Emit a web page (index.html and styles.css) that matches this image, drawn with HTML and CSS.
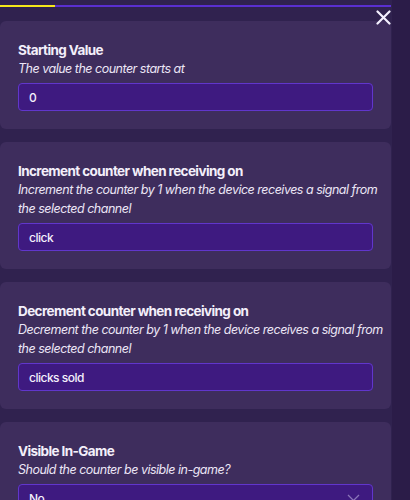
FILE: index.html
```html
<!DOCTYPE html>
<html>
<head>
<meta charset="utf-8">
<link rel="stylesheet" href="styles.css">
</head>
<body>
<div class="page">
  <div class="main">
    <div class="tabbar"><div class="tab-active"></div></div>
    <button class="close" aria-label="Close">
      <svg width="15" height="15" viewBox="0 0 15 15"><path d="M1.5 1.5 L13.5 13.5 M13.5 1.5 L1.5 13.5" stroke="#f4f0ff" stroke-width="2.2" stroke-linecap="round"/></svg>
    </button>
    <div class="cards">
      <section class="card">
        <h3 class="title">Starting Value</h3>
        <p class="desc">The value the counter starts at</p>
        <div class="field">0</div>
      </section>
      <section class="card">
        <h3 class="title">Increment counter when receiving on</h3>
        <p class="desc">Increment the counter by 1 when the device receives a signal from the selected channel</p>
        <div class="field">click</div>
      </section>
      <section class="card">
        <h3 class="title">Decrement counter when receiving on</h3>
        <p class="desc">Decrement the counter by 1 when the device receives a signal from the selected channel</p>
        <div class="field">clicks sold</div>
      </section>
      <section class="card">
        <h3 class="title">Visible In-Game</h3>
        <p class="desc">Should the counter be visible in-game?</p>
        <div class="field select">No
          <svg class="chev" width="13" height="8" viewBox="0 0 13 8"><path d="M1 1 L6.5 6.5 L12 1" stroke="#8a74b8" stroke-width="1.3" fill="none"/></svg>
        </div>
      </section>
    </div>
  </div>
  <div class="rail"></div>
</div>
</body>
</html>
```

FILE: styles.css
```css
html, body {
  margin: 0;
  padding: 0;
  height: 100%;
}
body {
  background: #30224f;
  font-family: Inter, "Noto Sans", sans-serif;
  color: #f1ecfa;
  overflow: hidden;
}
.page {
  display: flex;
  height: 500px;
}
.main {
  width: 392px;
  position: relative;
}
.rail {
  flex: 1;
  background: #2b1c48;
}
.tabbar {
  margin-top: 5px;
  height: 2px;
  background: #5a2fd0;
  width: 391px;
}
.tab-active {
  width: 55px;
  height: 2px;
  background: #f5e71a;
}
.close {
  position: absolute;
  top: 9px;
  right: 1px;
  width: 16px;
  height: 16px;
  padding: 0;
  border: 0;
  background: none;
  display: flex;
  align-items: center;
  justify-content: center;
}
.cards {
  display: flex;
  flex-direction: column;
  gap: 13px;
  padding-top: 14px;
}
.card {
  width: 391px;
  box-sizing: border-box;
  background: #3e2d5d;
  border-radius: 6px;
  padding: 20px 4px 18px 18px;
}
.title {
  margin: 0;
  font-size: 13.5px;
  font-weight: 700;
  letter-spacing: -0.6px;
  line-height: 18px;
  color: #f3effa;
}
.desc {
  margin: 0;
  font-size: 12.5px;
  font-style: italic;
  letter-spacing: -0.5px;
  line-height: 19px;
  color: #ece6f6;
}
.field {
  margin-top: 5px;
  height: 28px;
  box-sizing: border-box;
  width: 355px;
  background: #3e1a80;
  border: 1px solid #6136cc;
  border-radius: 4px;
  padding: 0 10px;
  display: flex;
  align-items: center;
  font-size: 12px;
  font-weight: 500;
  letter-spacing: -0.5px;
  color: #f4f0fc;
}
.select {
  justify-content: space-between;
}
.chev {
  margin-right: 2px;
}
```
